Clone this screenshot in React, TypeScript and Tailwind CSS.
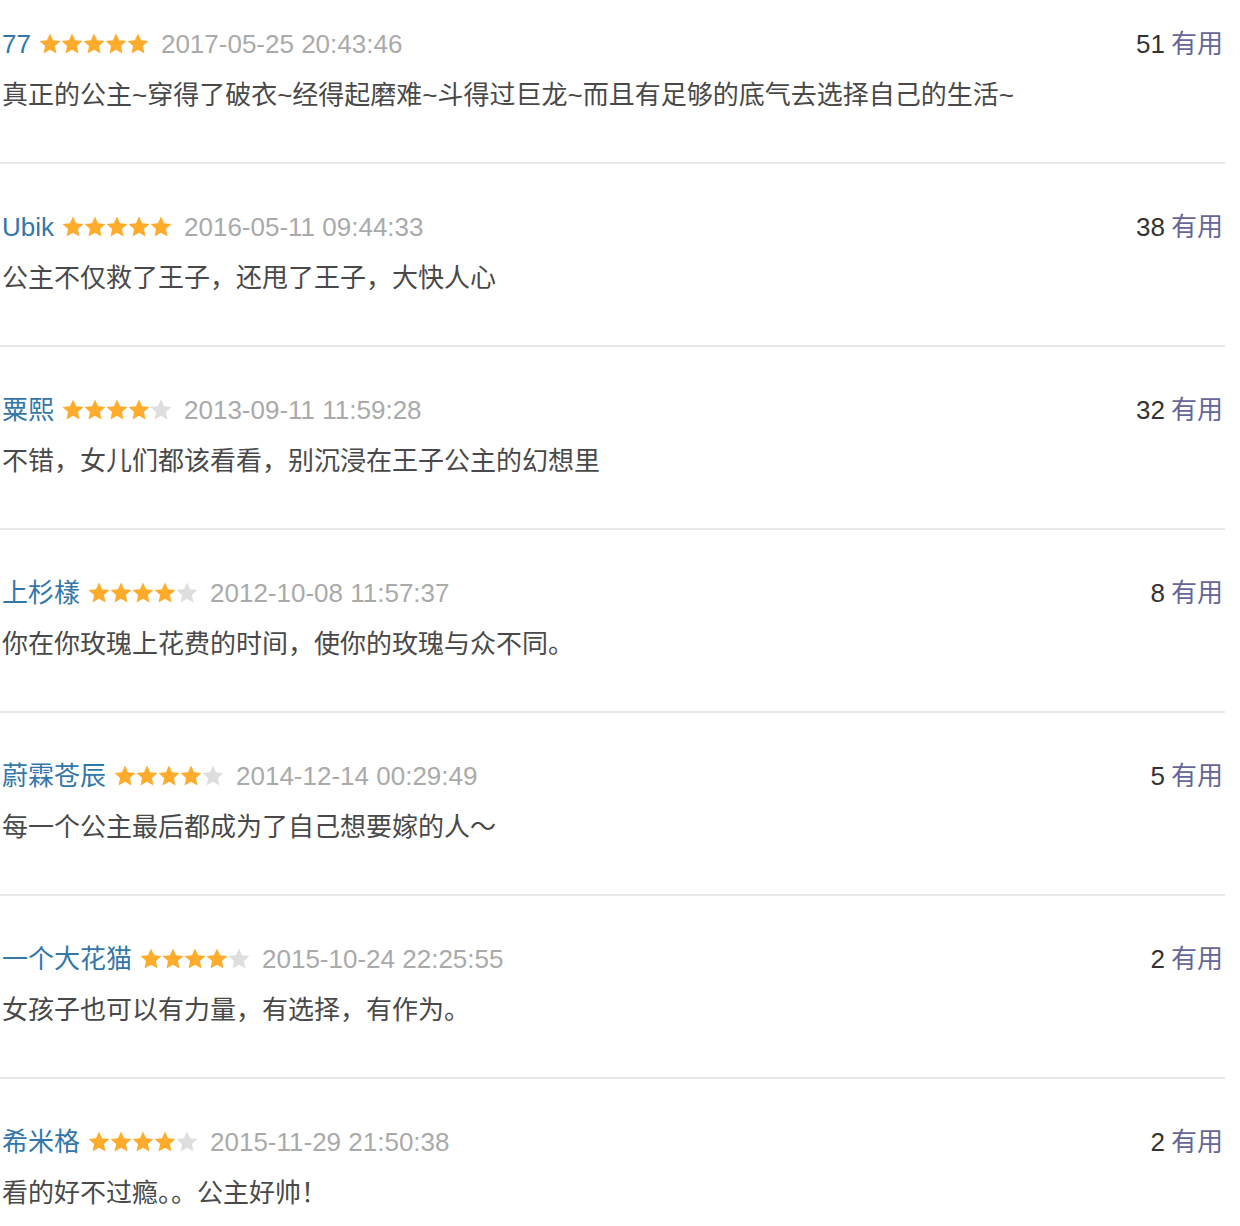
import React from "react";

type Review = { name: string; stars: number; date: string; votes: number; text: string };

const reviews: Review[] = [
  { name: "77", stars: 5, date: "2017-05-25 20:43:46", votes: 51, text: "真正的公主~穿得了破衣~经得起磨难~斗得过巨龙~而且有足够的底气去选择自己的生活~" },
  { name: "Ubik", stars: 5, date: "2016-05-11 09:44:33", votes: 38, text: "公主不仅救了王子，还甩了王子，大快人心" },
  { name: "粟熙", stars: 4, date: "2013-09-11 11:59:28", votes: 32, text: "不错，女儿们都该看看，别沉浸在王子公主的幻想里" },
  { name: "上杉樣", stars: 4, date: "2012-10-08 11:57:37", votes: 8, text: "你在你玫瑰上花费的时间，使你的玫瑰与众不同。" },
  { name: "蔚霖苍辰", stars: 4, date: "2014-12-14 00:29:49", votes: 5, text: "每一个公主最后都成为了自己想要嫁的人～" },
  { name: "一个大花猫", stars: 4, date: "2015-10-24 22:25:55", votes: 2, text: "女孩子也可以有力量，有选择，有作为。" },
  { name: "希米格", stars: 4, date: "2015-11-29 21:50:38", votes: 2, text: "看的好不过瘾。。公主好帅！" },
];

function Star({ on }: { on: boolean }) {
  return (
    <svg width="22" height="22" viewBox="0 0 22 22" className="block">
      <polygon
        points="11,0.5 14.06,7.29 21.46,8.1 15.95,13.11 17.47,20.4 11,16.7 4.53,20.4 6.05,13.11 0.54,8.1 7.94,7.29"
        fill={on ? "#ffac2d" : "#dedede"}
      />
    </svg>
  );
}

export default function App() {
  return (
    <div
      className="w-[1225px] bg-white text-[26px]"
      style={{ fontFamily: '"Liberation Sans", "Noto Sans CJK SC", sans-serif' }}
    >
      {reviews.map((r, i) => (
        <div
          key={i}
          className={`${i === 0 ? "pt-[26px]" : "pt-[45px]"} pb-[49px] border-b-2 border-[#e8e8e8]`}
        >
          <div className="flex items-center justify-between h-[36px] pl-[2px]">
            <div className="flex items-center">
              <span className="text-[#3377aa]">{r.name}</span>
              <span className="flex ml-[8px]">
                {[0, 1, 2, 3, 4].map((k) => (
                  <Star key={k} on={k < r.stars} />
                ))}
              </span>
              <span className="ml-[12px] text-[#aaaaaa]">{r.date}</span>
            </div>
            <div className="pr-[2px]">
              <span className="text-[#333333]">{r.votes}</span>
              <span className="ml-[6px] text-[#666699]">有用</span>
            </div>
          </div>
          <div className="mt-[15px] h-[36px] leading-[36px] pl-[2px] text-[#494949]">{r.text}</div>
        </div>
      ))}
    </div>
  );
}
